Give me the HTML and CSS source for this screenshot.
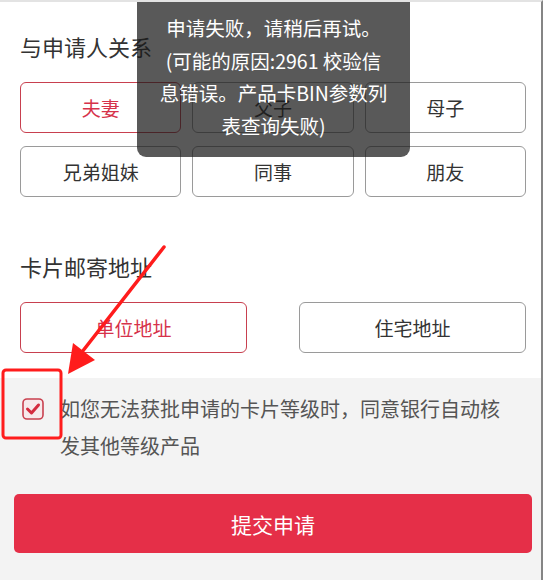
FILE: index.html
```html
<!DOCTYPE html>
<html lang="zh-CN">
<head>
  <meta charset="UTF-8">
  <title>申请信息</title>
  <link rel="stylesheet" href="styles.css">
</head>
<body>

<div class="page">
  <div class="form">
    <h3 class="label">与申请人关系</h3>
    <div class="options three">
      <div class="opt active">夫妻</div>
      <div class="opt">父子</div>
      <div class="opt">母子</div>
      <div class="opt">兄弟姐妹</div>
      <div class="opt">同事</div>
      <div class="opt">朋友</div>
    </div>

    <h3 class="label second">卡片邮寄地址</h3>
    <div class="options two">
      <div class="opt active">单位地址</div>
      <div class="opt">住宅地址</div>
    </div>
  </div>

  <div class="footer">
    <div class="agree">
      <span class="check">
        <svg width="22" height="22" viewBox="0 0 22 22">
          <rect x="1" y="1" width="20" height="20" rx="4" fill="#f7e9eb" stroke="#c9404f" stroke-width="1.6"/>
          <polyline points="5.5,11 9.5,15 16.5,7" fill="none" stroke="#d42a3e" stroke-width="3" stroke-linecap="round" stroke-linejoin="round"/>
        </svg>
      </span>
      <p>如您无法获批申请的卡片等级时，同意银行自动核发其他等级产品</p>
    </div>
    <button class="submit">提交申请</button>
  </div>

  <div class="toast">
    申请失败，请稍后再试。<br>
    (可能的原因:2961 校验信<br>
    息错误。产品卡BIN参数列<br>
    表查询失败)
  </div>

  <!-- annotation drawn on top of the screenshot -->
  <svg class="mark" width="544" height="580" viewBox="0 0 544 580">
    <rect x="3" y="370" width="58" height="68" rx="3" fill="none" stroke="#ff1c1c" stroke-width="3"/>
    <line x1="164" y1="247" x2="82" y2="352" stroke="#ff1c1c" stroke-width="3.5" stroke-linecap="round"/>
    <polygon points="68,374 73,343 95,360" fill="#ff1c1c"/>
  </svg>
</div>

</body>
</html>
```

FILE: styles.css
```css
body {
  margin: 0;
  font-family: "Noto Sans CJK SC", "Noto Sans", sans-serif;
  background: #fff;
}

.page {
  position: relative;
  width: 543px;
  height: 580px;
  box-sizing: border-box;
  border-top: 2px solid #e3e3e3;
  border-right: 2px solid #858585;
  display: flex;
  flex-direction: column;
  overflow: hidden;
}

.form {
  padding: 29px 0 25px 20px;
}

.label {
  margin: 0;
  font-size: 22px;
  line-height: 30px;
  font-weight: normal;
  color: #333;
}

.label.second {
  margin-top: 54px;
}

.options {
  display: grid;
  width: 506px;
  margin-top: 21px;
}

.options.three {
  grid-template-columns: repeat(3, 1fr);
  gap: 13px 11px;
}

.options.two {
  grid-template-columns: repeat(2, 1fr);
  gap: 52px;
}

.opt {
  height: 51px;
  box-sizing: border-box;
  border: 1.5px solid #9a9a9a;
  border-radius: 6px;
  display: flex;
  align-items: center;
  justify-content: center;
  font-size: 19px;
  color: #333;
}

.opt.active {
  border-color: #c8404f;
  color: #d6324a;
}

.footer {
  flex: 1;
  background: #f3f3f3;
  padding-top: 12px;
}

.agree {
  display: flex;
  align-items: flex-start;
}

.check {
  margin: 8px 0 0 22px;
  width: 22px;
  height: 22px;
  flex: none;
}

.check svg {
  display: block;
}

.agree p {
  margin: 0 0 0 16px;
  width: 452px;
  font-size: 20px;
  line-height: 37px;
  color: #555;
}

.submit {
  display: block;
  margin: 30px 0 0 14px;
  width: 518px;
  height: 59px;
  border: none;
  border-radius: 5px;
  background: #e52f48;
  color: #fff;
  font-family: inherit;
  font-size: 21px;
}

.toast {
  position: absolute;
  left: 137px;
  top: -2px;
  width: 273px;
  height: 157px;
  box-sizing: border-box;
  padding-top: 12px;
  border-radius: 0 0 9px 9px;
  background: rgba(25, 25, 25, 0.72);
  color: #fff;
  text-align: center;
  font-size: 19.5px;
  line-height: 32.5px;
}

.mark {
  position: absolute;
  left: 0;
  top: -2px;
  pointer-events: none;
}
```
